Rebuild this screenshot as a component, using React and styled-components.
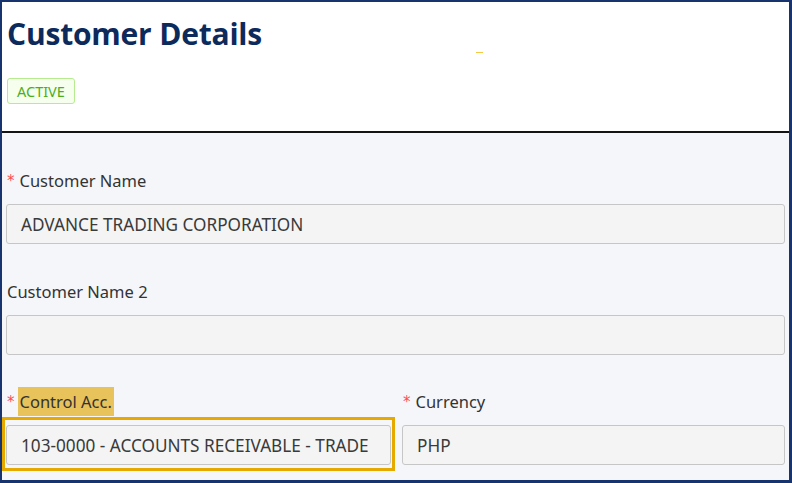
import React from 'react';
import styled, { createGlobalStyle } from 'styled-components';

const GlobalStyle = createGlobalStyle`
  html, body {
    margin: 0;
    padding: 0;
    background: #ffffff;
  }
  * {
    box-sizing: border-box;
  }
`;

const Frame = styled.div`
  width: 792px;
  height: 483px;
  border: 2px solid #17346f;
  border-right-width: 3px;
  border-bottom-width: 3px;
  overflow: hidden;
  display: flex;
  flex-direction: column;
  font-family: 'Noto Sans', 'Open Sans', sans-serif;
  background: #f5f6fa;
`;

const Header = styled.div`
  height: 131px;
  flex-shrink: 0;
  background: #ffffff;
  border-bottom: 2px solid #141414;
  padding: 11px 5px 0 5px;
`;

const TitleRow = styled.div`
  display: flex;
  align-items: flex-start;
`;

const Title = styled.h1`
  margin: 0;
  font-family: 'Open Sans', 'Noto Sans', sans-serif;
  font-weight: 700;
  font-size: 30px;
  line-height: 42px;
  color: #0d2a5c;
  letter-spacing: -0.2px;
`;

const Dash = styled.span`
  width: 7px;
  height: 1px;
  margin: 39px 0 0 214px;
  background: #f5c842;
`;

const StatusTag = styled.span`
  display: inline-flex;
  align-items: center;
  margin-top: 23px;
  height: 26px;
  padding: 0 9px;
  border: 1px solid #b7eb8f;
  border-radius: 3px;
  background: #f6ffed;
  color: #4cae1e;
  font-size: 14.5px;
`;

const Content = styled.div`
  flex: 1;
  padding: 33px 4px 0 4px;
  display: flex;
  flex-direction: column;
  gap: 33px;
`;

const Field = styled.div`
  display: flex;
  flex-direction: column;
  gap: 9px;
`;

const Row = styled.div`
  display: grid;
  grid-template-columns: 385px 1fr;
  gap: 11px;
  margin-top: -1px;
`;

const Label = styled.div`
  display: flex;
  align-items: center;
  height: 29px;
  padding-left: 1px;
  font-size: 16.5px;
  color: #333333;
`;

const Required = styled.span`
  color: #ff4d4f;
  font-size: 15px;
  margin-right: 5px;
  font-family: 'DejaVu Sans', sans-serif;
`;

const LabelText = styled.span`
  padding: ${(p) => (p.$highlight ? '0 2px' : '0')};
  margin-left: ${(p) => (p.$highlight ? '-2px' : '0')};
  line-height: 29px;
  background: ${(p) => (p.$highlight ? '#e8c25a' : 'transparent')};
`;

const FocusRing = styled.div`
  margin: -8px -4px -6px -4px;
  padding: 5px 1px 3px 1px;
  border: 3px solid #e6a900;
`;

const Input = styled.div`
  height: 40px;
  display: flex;
  align-items: center;
  padding: 0 14px;
  background: #f4f4f4;
  border: 1px solid #c6c6c6;
  border-radius: 3px;
  font-size: 17.2px;
  color: #3a3a3a;
  white-space: nowrap;
  overflow: hidden;
`;

const fields = [
  { label: 'Customer Name', required: true, value: 'ADVANCE TRADING CORPORATION' },
  { label: 'Customer Name 2', required: false, value: '' },
];

const App = () => {
  return (
    <>
      <GlobalStyle />
      <Frame>
        <Header>
          <TitleRow>
            <Title>Customer Details</Title>
            <Dash />
          </TitleRow>
          <StatusTag>ACTIVE</StatusTag>
        </Header>
        <Content>
          {fields.map((f) => (
            <Field key={f.label}>
              <Label>
                {f.required && <Required>*</Required>}
                <LabelText>{f.label}</LabelText>
              </Label>
              <Input>{f.value}</Input>
            </Field>
          ))}
          <Row>
            <Field>
              <Label>
                <Required>*</Required>
                <LabelText $highlight>Control Acc.</LabelText>
              </Label>
              <FocusRing>
                <Input>103-0000 - ACCOUNTS RECEIVABLE - TRADE</Input>
              </FocusRing>
            </Field>
            <Field>
              <Label>
                <Required>*</Required>
                <LabelText>Currency</LabelText>
              </Label>
              <Input>PHP</Input>
            </Field>
          </Row>
        </Content>
      </Frame>
    </>
  );
};

export default App;
